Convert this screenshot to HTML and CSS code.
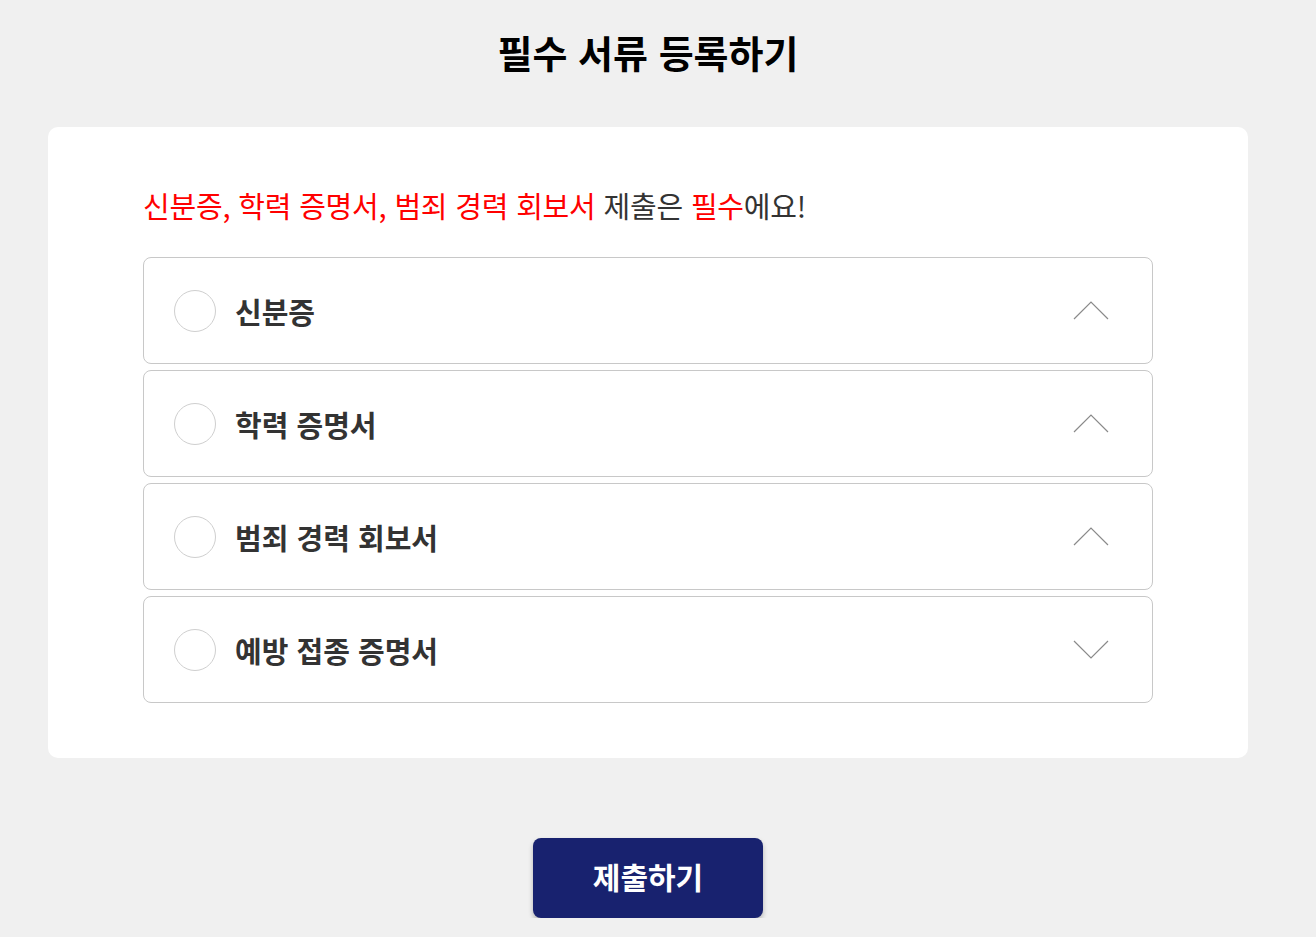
FILE: index.html
```html
<!DOCTYPE html>
<html lang="ko">
<head>
<meta charset="utf-8">
<title>필수 서류 등록하기</title>
<link rel="stylesheet" href="styles.css">
</head>
<body>
<main class="page">
  <h1 class="title">필수 서류 등록하기</h1>
  <section class="card">
    <p class="notice"><span class="red">신분증, 학력 증명서, 범죄 경력 회보서</span> 제출은 <span class="red">필수</span>에요!</p>
    <ul class="docs">
      <li class="doc">
        <span class="check"></span>
        <span class="label">신분증</span>
        <svg class="chev" width="36" height="19" viewBox="0 0 36 19"><polyline points="1,18 18,1 35,18" fill="none" stroke="#8a8a8a" stroke-width="1.2"/></svg>
      </li>
      <li class="doc">
        <span class="check"></span>
        <span class="label">학력 증명서</span>
        <svg class="chev" width="36" height="19" viewBox="0 0 36 19"><polyline points="1,18 18,1 35,18" fill="none" stroke="#8a8a8a" stroke-width="1.2"/></svg>
      </li>
      <li class="doc">
        <span class="check"></span>
        <span class="label">범죄 경력 회보서</span>
        <svg class="chev" width="36" height="19" viewBox="0 0 36 19"><polyline points="1,18 18,1 35,18" fill="none" stroke="#8a8a8a" stroke-width="1.2"/></svg>
      </li>
      <li class="doc">
        <span class="check"></span>
        <span class="label">예방 접종 증명서</span>
        <svg class="chev" width="36" height="19" viewBox="0 0 36 19"><polyline points="1,1 18,18 35,1" fill="none" stroke="#8a8a8a" stroke-width="1.2"/></svg>
      </li>
    </ul>
  </section>
  <div class="actions">
    <button class="submit" type="button">제출하기</button>
  </div>
</main>
</body>
</html>
```
FILE: styles.css
```css
* { box-sizing: border-box; }
html, body {
  margin: 0;
  padding: 0;
  background: #f0f0f0;
  font-family: "Noto Sans CJK KR", "Noto Sans", sans-serif;
}
.page {
  display: flex;
  flex-direction: column;
  align-items: center;
  padding: 26px 20px 0 0;
}
.title {
  margin: 0;
  font-size: 38px;
  line-height: 52px;
  font-weight: 700;
  color: #000;
}
.card {
  margin-top: 49px;
  width: 1200px;
  background: #fff;
  border-radius: 10px;
  padding: 58px 95px 55px;
}
.notice {
  margin: 0;
  font-size: 29px;
  line-height: 40px;
  color: #333;
  letter-spacing: -0.2px;
}
.red { color: #ff0000; }
.docs {
  list-style: none;
  margin: 32px 0 0;
  padding: 0;
  display: flex;
  flex-direction: column;
  gap: 6px;
}
.doc {
  height: 107px;
  border: 1px solid #c8c8c8;
  border-radius: 8px;
  display: flex;
  align-items: center;
  padding: 0 43px 0 30px;
}
.check {
  width: 42px;
  height: 42px;
  border: 1px solid #cfcfcf;
  border-radius: 50%;
  flex: none;
}
.label {
  margin-left: 19px;
  font-size: 29px;
  font-weight: 700;
  color: #333;
  flex: 1;
}
.chev { flex: none; }
.actions {
  margin-top: 80px;
  display: flex;
  justify-content: center;
}
.submit {
  width: 230px;
  height: 80px;
  border: none;
  border-radius: 8px;
  background: #18226f;
  color: #fff;
  font-family: "Noto Sans CJK KR", "Noto Sans", sans-serif;
  font-size: 30px;
  font-weight: 700;
  padding: 0 0 4px;
  box-shadow: 0 3px 5px rgba(0,0,0,0.25);
}
```
